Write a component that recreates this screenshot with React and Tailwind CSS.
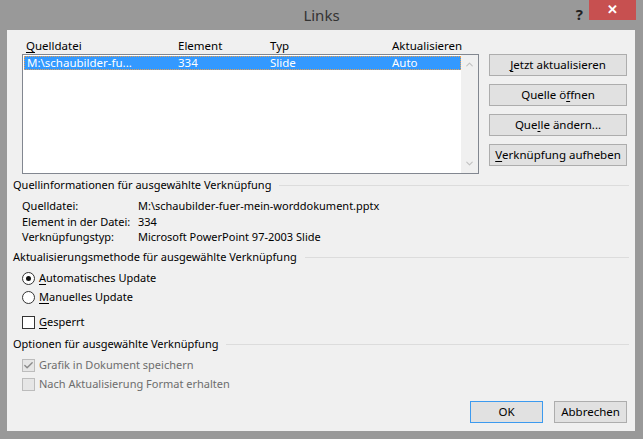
import { ChevronUp, ChevronDown, Check } from 'lucide-react'

function U({ children }) {
  return <span className="underline underline-offset-2">{children}</span>
}

function Btn({ children, primary }) {
  return (
    <div
      className={`flex h-[22px] items-center justify-center border bg-[#e1e1e1] text-[11.5px] text-black ${
        primary ? 'border-[#3c9aef]' : 'border-[#adadad]'
      }`}
    >
      {children}
    </div>
  )
}

function Heading({ children }) {
  return (
    <div className="flex h-[16px] items-center gap-[8px]">
      <span className="whitespace-nowrap text-[11px] text-black">{children}</span>
      <div className="h-px flex-1 bg-[#dcdcdc]" />
    </div>
  )
}

function Radio({ checked, children }) {
  return (
    <div className="flex h-[19px] items-center gap-[4px] pl-[9px] text-[11px]">
      <span className="flex h-[13px] w-[13px] items-center justify-center rounded-full border border-[#333] bg-white">
        {checked && <span className="h-[5px] w-[5px] rounded-full bg-[#111]" />}
      </span>
      <span>{children}</span>
    </div>
  )
}

export default function App() {
  return (
    <div
      className="flex h-[439px] w-[643px] flex-col bg-[#999999] text-black"
      style={{ fontFamily: '"Noto Sans", "Open Sans", sans-serif' }}
    >
      {/* Title bar */}
      <div className="relative flex h-[30px] items-center justify-center">
        <span className="text-[15px] text-[#333]">Links</span>
        <div className="absolute right-[7px] top-0 flex h-[30px] items-start gap-[6px]">
          <span className="mt-[3px] text-[15px] font-bold text-[#222]">?</span>
          <div className="flex h-[20px] w-[47px] items-center justify-center bg-[#c75050] text-[13px] font-bold text-white">
            ✕
          </div>
        </div>
      </div>

      {/* Client area */}
      <div className="mx-[7px] flex h-[401px] w-[628px] flex-col bg-[#f0f0f0] px-[6px]">
        <div className="flex gap-[10px] pl-[9px] pt-[7px]">
          <div className="flex w-[457px] flex-col">
            <div className="relative h-[17px] text-[11.5px]">
              <span className="absolute left-[4px] top-0"><U>Q</U>uelldatei</span>
              <span className="absolute left-[156px] top-0">Element</span>
              <span className="absolute left-[248px] top-0">Typ</span>
              <span className="absolute left-[370px] top-0">Aktualisieren</span>
            </div>
            <div className="flex h-[120px] border border-[#828790] bg-white">
              <div className="flex-1 pl-[1px] pt-[1px]">
                <div className="relative h-[14px] bg-[#3399ff] text-[11.5px] leading-[14px] text-white outline-1 outline-dotted outline-[#e8a050] -outline-offset-1">
                  <span className="absolute left-[3px]">M:\schaubilder-fu...</span>
                  <span className="absolute left-[154px]">334</span>
                  <span className="absolute left-[246px]">Slide</span>
                  <span className="absolute left-[368px]">Auto</span>
                </div>
              </div>
              <div className="flex w-[17px] flex-col items-center justify-between bg-[#f0f0f0] py-[4px]">
                <ChevronUp className="h-[11px] w-[11px] text-[#c2c2c2]" strokeWidth={2.5} />
                <ChevronDown className="h-[11px] w-[11px] text-[#c2c2c2]" strokeWidth={2.5} />
              </div>
            </div>
          </div>
          <div className="flex w-[138px] flex-col gap-[8px] pt-[17px]">
            <Btn><U>J</U>etzt aktualisieren</Btn>
            <Btn>Quelle ö<U>f</U>fnen</Btn>
            <Btn>Que<U>l</U>le ändern...</Btn>
            <Btn><U>V</U>erknüpfung aufheben</Btn>
          </div>
        </div>

        <div className="mt-[3px]">
          <Heading>Quellinformationen für ausgewählte Verknüpfung</Heading>
        </div>
        <div className="mt-[5px] grid grid-cols-[116px_1fr] whitespace-nowrap pl-[9px] text-[11px] leading-[15.5px]">
          <span>Quelldatei:</span>
          <span>M:\schaubilder-fuer-mein-worddokument.pptx</span>
          <span>Element in der Datei:</span>
          <span>334</span>
          <span>Verknüpfungstyp:</span>
          <span>Microsoft PowerPoint 97-2003 Slide</span>
        </div>

        <div className="mt-[5px]">
          <Heading>Aktualisierungsmethode für ausgewählte Verknüpfung</Heading>
        </div>
        <div className="mt-[3px] flex flex-col">
          <Radio checked><U>A</U>utomatisches Update</Radio>
          <Radio><U>M</U>anuelles Update</Radio>
        </div>
        <div className="mt-[6px] flex h-[19px] items-center gap-[4px] pl-[9px] text-[11px]">
          <span className="h-[13px] w-[13px] border border-[#333] bg-white" />
          <span><U>G</U>esperrt</span>
        </div>

        <div className="mt-[5px]">
          <Heading>Optionen für ausgewählte Verknüpfung</Heading>
        </div>
        <div className="mt-[3px] flex flex-col text-[11px] text-[#6d6d6d]">
          <div className="flex h-[19px] items-center gap-[4px] pl-[9px]">
            <span className="flex h-[13px] w-[13px] items-center justify-center border border-[#bcbcbc] bg-[#e6e6e6]">
              <Check className="h-[11px] w-[11px] text-[#8a8a8a]" strokeWidth={3} />
            </span>
            <span>Grafik in Dokument speichern</span>
          </div>
          <div className="flex h-[19px] items-center gap-[4px] pl-[9px]">
            <span className="h-[13px] w-[13px] border border-[#bcbcbc] bg-[#e6e6e6]" />
            <span>Nach Aktualisierung Format erhalten</span>
          </div>
        </div>

        <div className="mt-[7px] flex justify-end gap-[11px] pr-[2px]">
          <div className="w-[73px]"><Btn primary>OK</Btn></div>
          <div className="w-[73px]"><Btn>Abbrechen</Btn></div>
        </div>
      </div>
      <div className="flex-1" />
    </div>
  )
}
